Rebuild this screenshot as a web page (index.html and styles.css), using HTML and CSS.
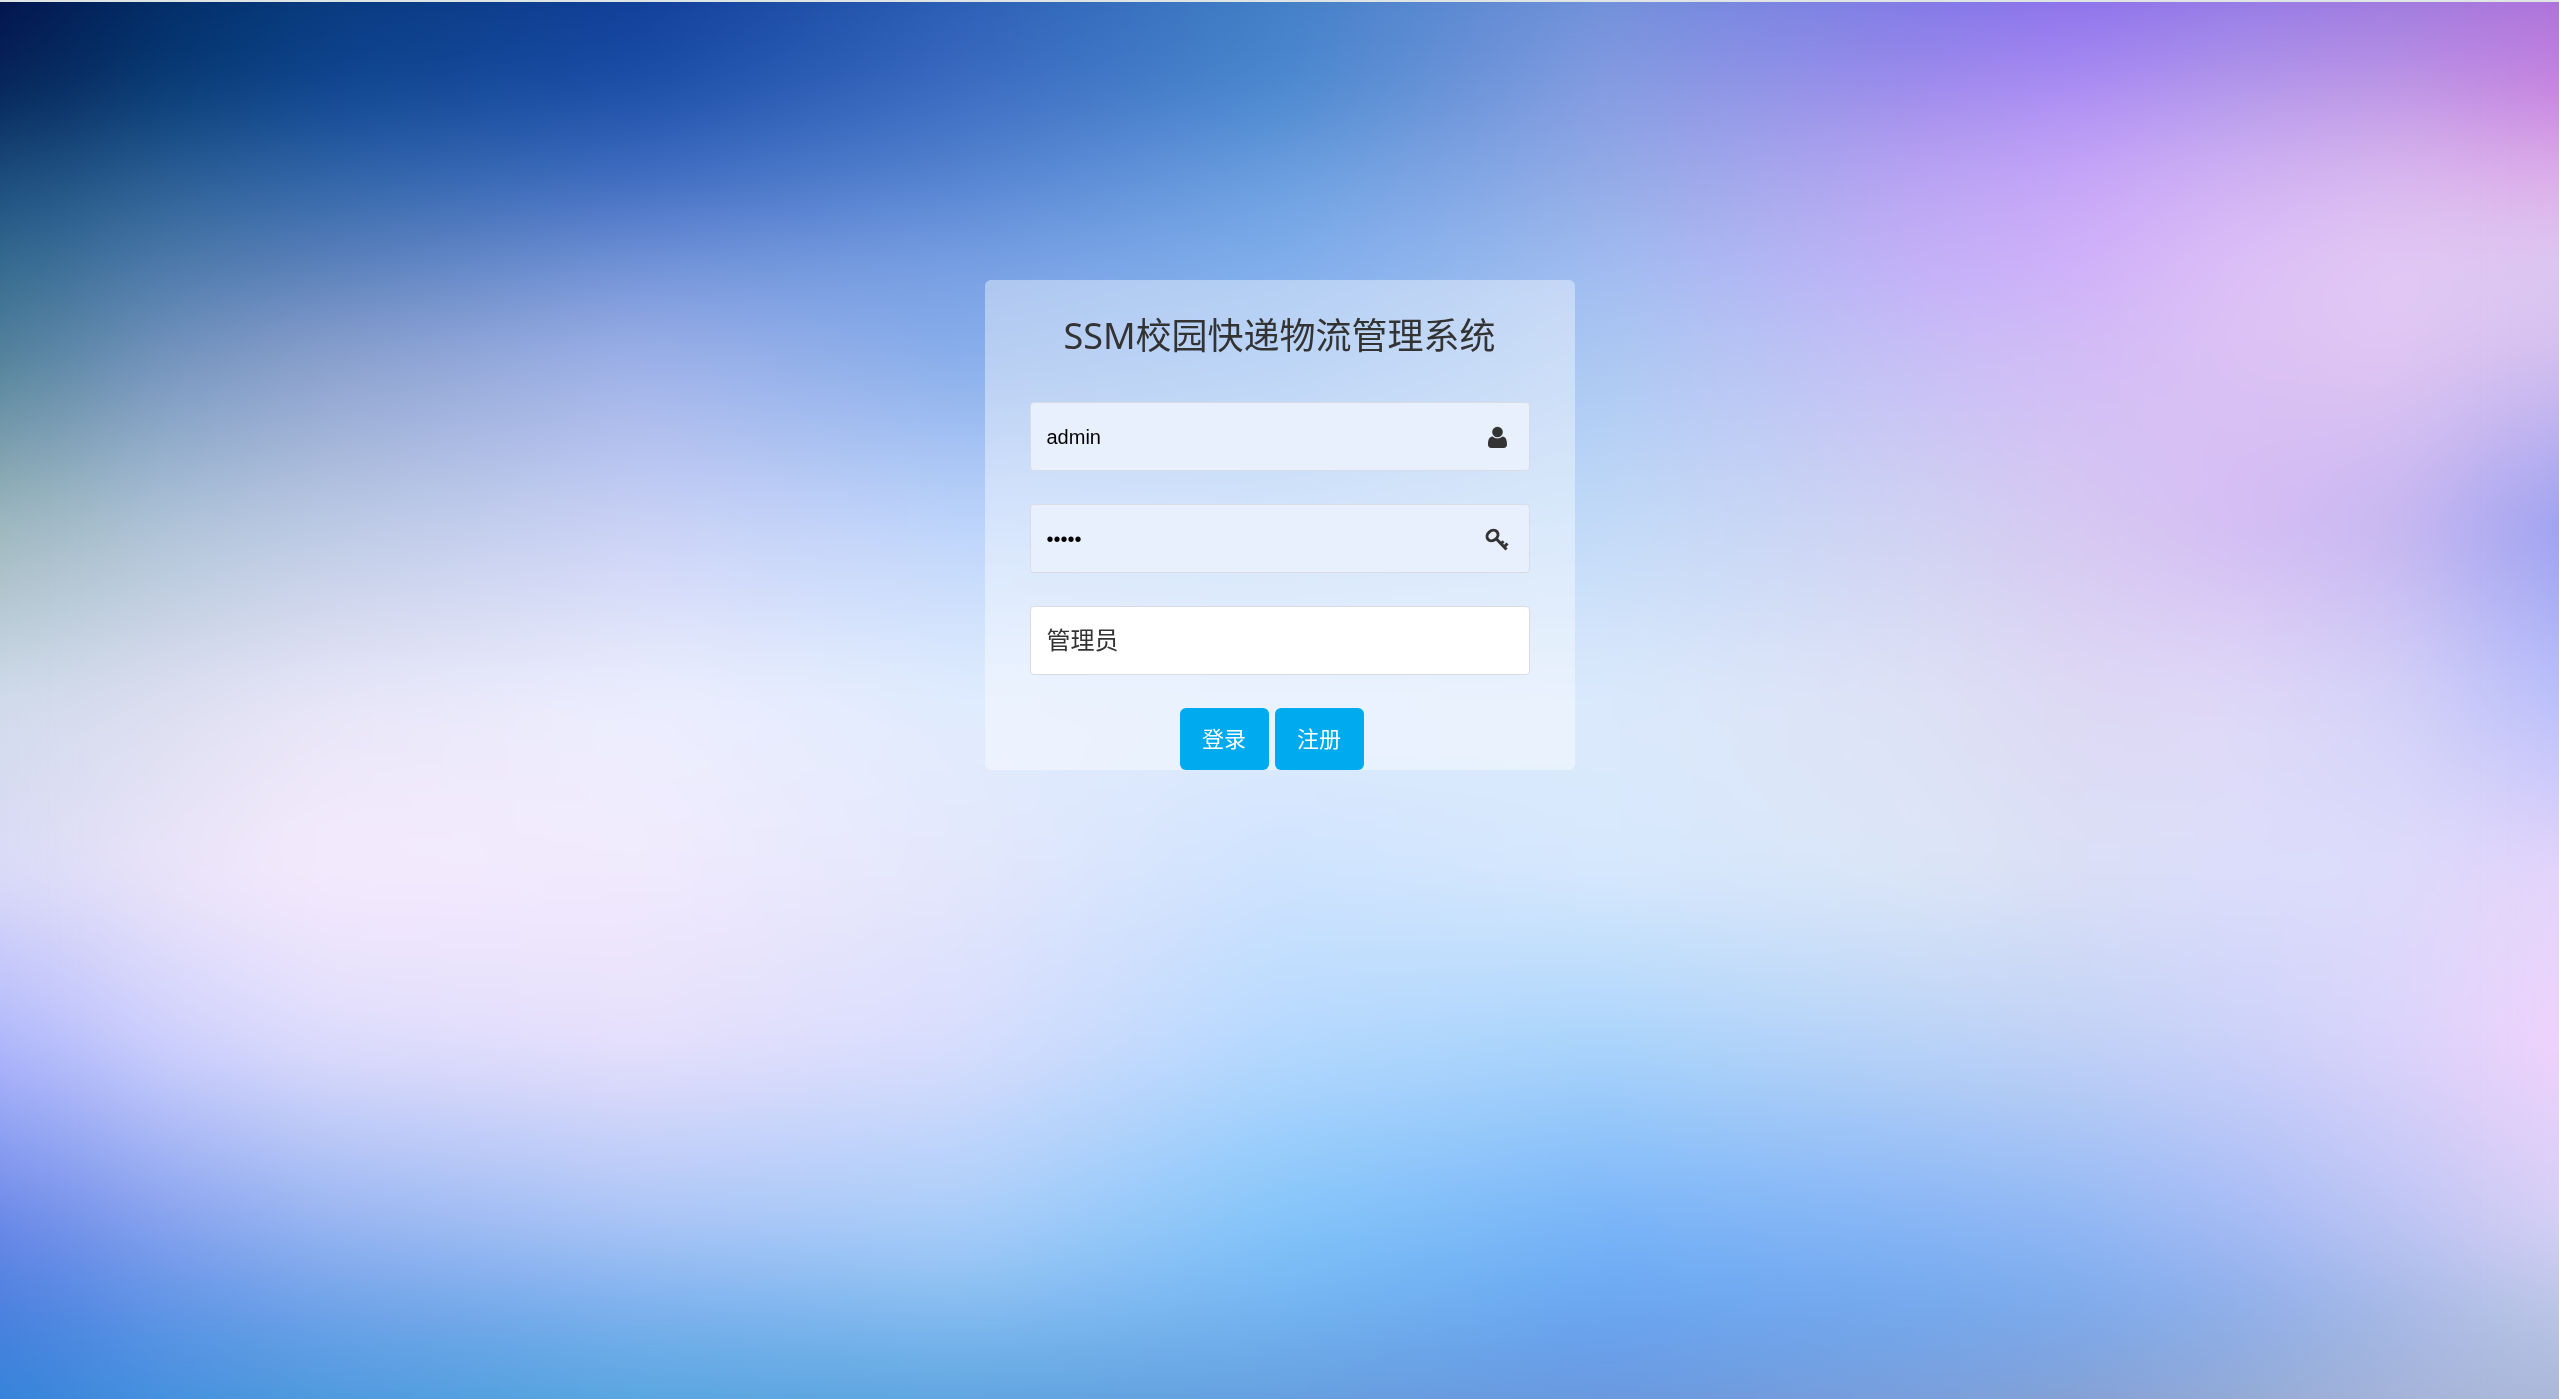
FILE: index.html
```html
<!DOCTYPE html>
<html lang="zh-CN">
<head>
<meta charset="utf-8">
<meta name="viewport" content="width=device-width, initial-scale=1">
<title>SSM校园快递物流管理系统</title>
<link rel="stylesheet" href="styles.css">
</head>
<body>
<div class="backdrop" aria-hidden="true">
  <div class="band band-1"></div>
  <div class="band band-2"></div>
  <div class="band band-3"></div>
  <div class="band band-4"></div>
  <div class="band band-5"></div>
  <div class="band band-6"></div>
  <div class="band band-7"></div>
  <div class="band band-8"></div>
  <div class="band band-9"></div>
  <div class="band band-10"></div>
  <div class="band band-11"></div>
  <div class="band band-12"></div>
  <div class="smooth"></div>
</div>
<main class="page">
  <form class="card">
    <h1 class="title">SSM校园快递物流管理系统</h1>
    <div class="fields">
      <label class="field">
        <input class="control filled" type="text" value="admin" aria-label="用户名">
        <svg class="icon" viewBox="0 0 24 24" aria-hidden="true">
          <ellipse cx="11.500" cy="8" rx="5.300" ry="5.300"/>
          <path d="M6.500 12.500C3.400 12.800 2 15.500 2 20.500C2 22.800 3.300 24 5.300 24H17.700C19.700 24 21 22.800 21 20.500C21 15.500 19.600 12.800 16.500 12.500C13.500 15 9.500 15 6.500 12.500Z"/>
        </svg>
      </label>
      <label class="field">
        <input class="control filled" type="password" value="admin" aria-label="密码">
        <svg class="icon icon-line" viewBox="0 0 24 24" aria-hidden="true">
          <ellipse cx="6.500" cy="9.500" rx="5.900" ry="4.800" transform="rotate(-40 6.500 9.500)"/>
          <path d="M10.500 13L20.500 23.500M15.800 17L17.500 15.300M19 20L21.500 17.500"/>
        </svg>
      </label>
      <label class="field">
        <select class="control role" aria-label="角色"><option selected>管理员</option><option>用户</option></select>
      </label>
    </div>
    <div class="actions">
      <button class="btn" type="submit">登录</button>
      <button class="btn" type="button">注册</button>
    </div>
  </form>
</main>
</body>
</html>
```
FILE: styles.css
```css
* { box-sizing: border-box; }

body {
  margin: 0;
  min-height: 100vh;
  border-top: 2px solid #dfe4e4;
  color: #333;
  font-family: "Noto Sans", "Noto Sans CJK SC", sans-serif;
}

/* Colour mesh: every band is one row of colours, faded in over the row above. */
.backdrop {
  position: absolute;
  inset: 2px 0 0;
  z-index: -1;
  display: grid;
}

.band,
.smooth { grid-area: 1 / 1; }

/* Rounds off the seams between the mesh cells. */
.smooth { backdrop-filter: blur(32px); }

.band {
  background: linear-gradient(90deg,
    var(--a) 0%, var(--b) 6.25%, var(--c) 12.5%, var(--d) 25%, var(--e) 37.5%, var(--f) 50%,
    var(--g) 62.5%, var(--h) 75%, var(--i) 81.25%, var(--j) 87.5%, var(--k) 93.75%, var(--l) 100%);
  mask-image: linear-gradient(transparent var(--from), #000 var(--to));
}

.band-1 { mask-image: none;
  --a: #04134c; --b: #032c66; --c: #083a7c; --d: #103e98; --e: #2b5eb4; --f: #427fc6;
  --g: #6f90d9; --h: #7f78e6; --i: #8a70ea; --j: #9378e6; --k: #9b78de; --l: #ad72da; }
.band-2 { --from: 0%; --to: 6.25%;
  --a: #072659; --b: #083c74; --c: #0f4690; --d: #1c50a8; --e: #3c6cc2; --f: #4a88ce;
  --g: #869de2; --h: #a08cec; --i: #ae8ef4; --j: #b49aea; --k: #c098e6; --l: #c884e0; }
.band-3 { --from: 6.25%; --to: 12.5%;
  --a: #1a4b7b; --b: #2b5e94; --c: #3065a8; --d: #406cc2; --e: #5583d0; --f: #6b9fe0;
  --g: #92abe6; --h: #baa4f2; --i: #c6a6f8; --j: #d0b2f4; --k: #dab8ee; --l: #deaee8; }
.band-4 { --from: 12.5%; --to: 18.75%;
  --a: #346a8e; --b: #4c7aaa; --c: #5a80ba; --d: #7293d8; --e: #78a0e4; --f: #80aeec;
  --g: #a0bcf0; --h: #c4b0f8; --i: #d0b0fa; --j: #dcc0f7; --k: #e2caf5; --l: #dcc8f2; }
.band-5 { --from: 18.75%; --to: 25%;
  --a: #4f7f98; --b: #7292bd; --c: #889ecc; --d: #9cb0e8; --e: #86acea; --f: #8eb7f0;
  --g: #aac8f2; --h: #c7bef6; --i: #d2bcf6; --j: #dcc2f4; --k: #e0c6f3; --l: #d4bfee; }
.band-6 { --from: 25%; --to: 37.5%;
  --a: #9db7bc; --b: #afc4d8; --c: #bccae4; --d: #cbd2f6; --e: #bed5fb; --f: #b7d4f8;
  --g: #c2dbf8; --h: #d0d2f2; --i: #d6c8f2; --j: #d4bcf4; --k: #c6b6f0; --l: #9ba0f0; }
.band-7 { --from: 37.5%; --to: 50%;
  --a: #d0dbea; --b: #dcdff0; --c: #e8e6f8; --d: #edeffe; --e: #e1edfe; --f: #dfebfd;
  --g: #dceafc; --h: #dee2f6; --i: #ded9f4; --j: #dfd9f7; --k: #d4d2f8; --l: #b9bffa; }
.band-8 { --from: 50%; --to: 62.5%;
  --a: #dadaf8; --b: #ebe4f9; --c: #f6eafd; --d: #f1eafd; --e: #e4e7fc; --f: #cee3fe;
  --g: #d6e8fd; --h: #dce6f7; --i: #dbe0f6; --j: #dcdefb; --k: #dedcfb; --l: #e4d4fa; }
.band-9 { --from: 62.5%; --to: 75%;
  --a: #acb4fb; --b: #cccffd; --c: #dcdbfc; --d: #e6dffc; --e: #d8ddfd; --f: #b4d8fe;
  --g: #a8d3fb; --h: #b8d2f7; --i: #c0d1f6; --j: #cbd1f9; --k: #dbd3fb; --l: #f0d2fb; }
.band-10 { --from: 75%; --to: 87.5%;
  --a: #6886e6; --b: #85a0ee; --c: #96b4f1; --d: #a9c4f6; --e: #a8cdf9; --f: #82c4f9;
  --g: #78b4f8; --h: #86b4f5; --i: #90b7f4; --j: #a4baf5; --k: #bcc4f4; --l: #d6cff5; }
.band-11 { --from: 87.5%; --to: 93.75%;
  --a: #4a7fde; --b: #5f94e6; --c: #6ea1e8; --d: #7cb0ee; --e: #84bcf0; --f: #74b4f2;
  --g: #68a6f0; --h: #72a8ee; --i: #7baaec; --j: #8caeea; --k: #a4b8e6; --l: #bcc6e6; }
.band-12 { --from: 93.75%; --to: 100%;
  --a: #3483da; --b: #4290dc; --c: #4a99db; --d: #54a5de; --e: #5ba2de; --f: #649cdc;
  --g: #6a96dc; --h: #7b9dd8; --i: #869fd2; --j: #95aad3; --k: #a5b3d6; --l: #aab6d8; }

.page {
  display: flex;
  justify-content: center;
  padding: 278px 16px 32px;
}

.card {
  width: 100%;
  max-width: 590px;
  padding: 30px 45px 0;
  border-radius: 6px;
  background: rgba(255, 255, 255, 0.4);
}

.title {
  margin: 0 0 40px;
  font-size: 36px;
  font-weight: 400;
  line-height: 52px;
  text-align: center;
}

.fields {
  display: grid;
  gap: 33px;
  margin-bottom: 33px;
}

.field {
  position: relative;
  display: block;
}

.control {
  display: block;
  width: 100%;
  height: 69px;
  padding: 2px 16px 0;
  border: 1px solid #d9dce2;
  border-radius: 4px;
  outline: 0;
  background: #fff;
  color: #000;
  font: 20px "Liberation Sans", Arial, sans-serif;
  appearance: none;
}

.filled { background: #e8f0fe; }

.role {
  padding: 0 16px 4px;
  color: #333;
  font: 24px "Noto Sans CJK SC", sans-serif;
}

.icon {
  position: absolute;
  top: 22px;
  right: 20px;
  width: 24px;
  height: 24px;
  fill: #333;
}

.icon-line {
  overflow: visible;
  fill: none;
  stroke: #333;
  stroke-width: 3;
}

.actions {
  display: flex;
  justify-content: center;
  gap: 6px;
  padding-right: 16px;
}

.btn {
  width: 89px;
  height: 62px;
  padding: 0 0 4px;
  border: 0;
  border-radius: 6px;
  background: #00aaef;
  color: #fff;
  font: 22px "Noto Sans CJK SC", sans-serif;
  cursor: pointer;
}
```
